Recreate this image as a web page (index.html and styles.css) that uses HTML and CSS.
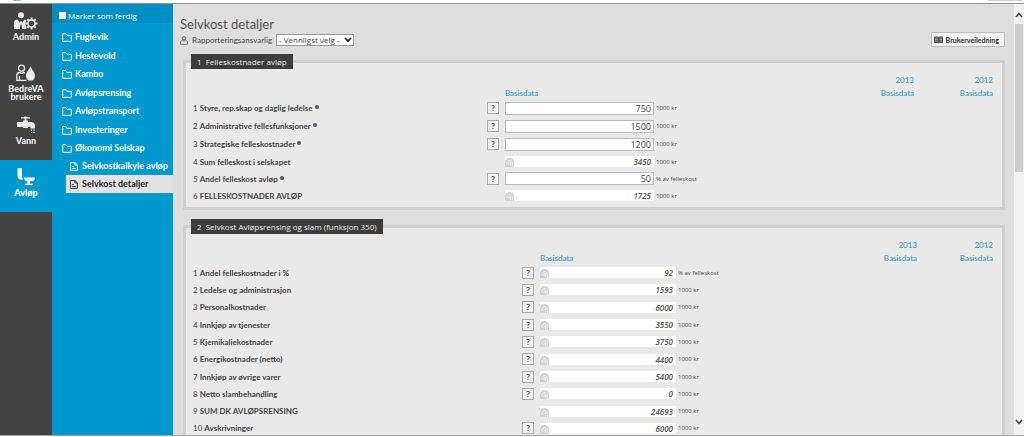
FILE: index.html
```html
<!DOCTYPE html>
<html lang="no">
<head>
<meta charset="utf-8">
<meta name="viewport" content="width=device-width, initial-scale=1">
<title>Selvkost detaljer</title>
<link rel="stylesheet" href="styles.css">
</head>
<body>
<svg class="defs" aria-hidden="true">
  <symbol id="folder" viewBox="0 0 10 9"><path d="M.7 8.3V.7h3.2l1 1.600h4.400v6z" fill="none" stroke="currentColor"/></symbol>
  <symbol id="page" viewBox="0 0 9 10"><path d="M.7.7h5l2.600 2.400v6.200H.7zM5.400.9v2.500h2.700M2.400 5h1.800M2.400 7.200h4.200" fill="none" stroke="currentColor"/></symbol>
  <symbol id="calc" viewBox="0 0 10 9"><path d="M0 9V4.500a4.500 4.500 0 0 1 9 0V9z" fill="#d0d0d0"/><path d="M1.800 6.500C2 4 3 2.500 5 2.500S7.500 4 7.500 9M3 6.500l2.500-2.300V8" fill="none" stroke="#f4f4f4" stroke-width=".9"/></symbol>
</svg>
<div class="topstrip"><span class="mark"></span><span class="tab"></span></div>
<div class="app">
  <nav class="modules" aria-label="Moduler">
    <a class="module" href="#admin">
      <svg width="24" height="18" viewBox="0 0 24 18"><g fill="currentColor"><circle cx="7" cy="3.300" r="3"/><path d="M0 17V10.500C0 8.500 1.500 7.500 3.500 7.500L6 11v6zM8 17v-6l2.500-3.500 2 .8c-1.500 2-1.500 4.500-.2 6.500v2.200z"/><path d="M7 9l1.200 1.500L7 15l-1.200-4.500z"/></g><circle cx="17.500" cy="11.500" r="3.600" fill="none" stroke="currentColor" stroke-width="1.600"/><path d="M17.500 5.500v2M17.500 15.500v2M11.500 11.500h2M21.500 11.500h2M13.300 7.300l1.400 1.400M20.300 14.300l1.400 1.400M13.300 15.700l1.400-1.400M20.300 8.700l1.400-1.400" stroke="currentColor" stroke-width="2"/></svg>
      <span>Admin</span>
    </a>
    <a class="module" href="#brukere">
      <svg width="20" height="18" viewBox="0 0 20 18"><g fill="none" stroke="currentColor" stroke-width="1.300"><circle cx="5.500" cy="4.200" r="3"/><path d="M10.500 16.300H.8V11.500c0-2 1.300-3 3-3 .8 1 2.800 1 3.600 0l1.600.4M3.500 12v4"/></g><path d="M14.500 2c1 3.500 4.500 6 4.500 10a4.500 4.800 0 0 1-9 0C10 8 13.500 5.500 14.500 2z" fill="currentColor"/></svg>
      <span>BedreVA brukere</span>
    </a>
    <a class="module" href="#vann">
      <svg width="20" height="18" viewBox="0 0 20 18"><path d="M5 1.200h3.500V.5h2v.7H14v1.200h-3.500V4.500H12V6h3c2.500 0 4 1.500 4 4v2.500h-4.500V11H12v1H7v-1H1V6h6V4.500h1.500V2.400H5z" fill="currentColor"/><path d="M15.500 13.500V18M18 13.500V18" stroke="currentColor" stroke-width="1.200" stroke-dasharray="1.200 1"/></svg>
      <span>Vann</span>
    </a>
    <a class="module is-active" href="#avlop">
      <svg width="18" height="18" viewBox="0 0 18 18"><path d="M1.500 0h2C4.300 0 5 .7 5 1.500V9l1 2.500H3.500C1.500 11.500.5 9.500.5 7V1.500C.5.500.8 0 1.500 0zM6.500 9.500H18c0 2.500-1.500 3.800-4 3.800h-1V15.700h3V17H8v-1.300h2.500v-2.500c-2-.2-3.500-1.200-4-3.700z" fill="currentColor"/></svg>
      <span>Avløp</span>
    </a>
  </nav>

  <aside class="sidebar">
    <label class="mark-done"><input type="checkbox">Marker som ferdig</label>
    <ul class="tree">
      <li><a href="#a"><svg class="ico"><use href="#folder"/></svg>Fuglevik</a></li>
      <li><a href="#b"><svg class="ico"><use href="#folder"/></svg>Hestevold</a></li>
      <li><a href="#c"><svg class="ico"><use href="#folder"/></svg>Kambo</a></li>
      <li><a href="#d"><svg class="ico"><use href="#folder"/></svg>Avløpsrensing</a></li>
      <li><a href="#e"><svg class="ico"><use href="#folder"/></svg>Avløpstransport</a></li>
      <li><a href="#f"><svg class="ico"><use href="#folder"/></svg>Investeringer</a></li>
      <li><a href="#g"><svg class="ico"><use href="#folder"/></svg>Økonomi Selskap</a>
        <ul class="subtree">
          <li><a href="#h"><svg class="ico"><use href="#page"/></svg>Selvkostkalkyle avløp</a></li>
          <li><a class="is-current" href="#i"><svg class="ico"><use href="#page"/></svg>Selvkost detaljer</a></li>
        </ul>
      </li>
    </ul>
  </aside>

  <main class="content">
    <header class="head">
      <div>
        <h1>Selvkost detaljer</h1>
        <div class="owner">
          <svg width="8" height="9" viewBox="0 0 8 9"><g fill="none" stroke="#666" stroke-width=".9"><circle cx="4" cy="2.300" r="1.700"/><path d="M.6 8.400V6c0-1.200.9-1.800 2-1.800.7.700 2 .7 2.800 0 1.100 0 2 .6 2 1.800v2.400z"/></g></svg>
          <label for="owner">Rapporteringsansvarlig</label>
          <div class="picker">
            <select id="owner"><option>- Vennligst velg -</option></select>
            <svg width="8" height="6" viewBox="0 0 8 6"><path d="M1 1l3 3.200L7 1" fill="none" stroke="#222" stroke-width="1.700"/></svg>
          </div>
        </div>
      </div>
      <button class="guide" type="button">
        <svg width="9" height="8" viewBox="0 0 9 8"><path d="M0 .5h4l.5.5.5-.5h4V7H5l-.5.700L4 7H0z" fill="#555"/><path d="M1 2h2.500M1 3.500h2.500M1 5h2.500M5.500 2H8M5.500 3.500H8M5.500 5H8" stroke="#ccc" stroke-width=".6"/></svg>
        Brukerveiledning
      </button>
    </header>

    <fieldset class="panel">
      <legend>1&nbsp; Felleskostnader avløp</legend>
      <table class="grid grid-inputs">
        <colgroup><col class="c-name"><col class="c-help"><col class="c-value"><col class="c-unit"><col class="c-year"><col class="c-last"></colgroup>
        <thead>
          <tr><th></th><th></th><th></th><th></th><th class="year">2013</th><th class="year">2012</th></tr>
          <tr><th></th><th></th><th class="base">Basisdata</th><th></th><th class="year">Basisdata</th><th class="year">Basisdata</th></tr>
        </thead>
        <tbody>
          <tr><td><label for="s1">1 <b>Styre, rep.skap og daglig ledelse</b></label><i class="dot"></i></td><td><button type="button" class="help">?</button></td><td><input id="s1" value="750"></td><td class="unit">1000 kr</td><td></td><td></td></tr>
          <tr><td><label for="s2">2 <b>Administrative fellesfunksjoner</b></label><i class="dot"></i></td><td><button type="button" class="help">?</button></td><td><input id="s2" value="1500"></td><td class="unit">1000 kr</td><td></td><td></td></tr>
          <tr><td><label for="s3">3 <b>Strategiske felleskostnader</b></label><i class="dot"></i></td><td><button type="button" class="help">?</button></td><td><input id="s3" value="1200"></td><td class="unit">1000 kr</td><td></td><td></td></tr>
          <tr class="short"><td>4 <b>Sum felleskost i selskapet</b></td><td></td><td><output class="sum"><svg class="calc"><use href="#calc"/></svg>3450</output></td><td class="unit">1000 kr</td><td></td><td></td></tr>
          <tr class="short"><td><label for="s5">5 <b>Andel felleskost avløp</b></label><i class="dot"></i></td><td><button type="button" class="help">?</button></td><td><input id="s5" value="50"></td><td class="unit">% av felleskost</td><td></td><td></td></tr>
          <tr class="short"><td>6 <b>FELLESKOSTNADER AVLØP</b></td><td></td><td><output class="sum"><svg class="calc"><use href="#calc"/></svg>1725</output></td><td class="unit">1000 kr</td><td></td><td></td></tr>
        </tbody>
      </table>
    </fieldset>

    <fieldset class="panel">
      <legend>2&nbsp; Selvkost Avløpsrensing og slam (funksjon 350)</legend>
      <table class="grid grid-sums">
        <colgroup><col class="c-name"><col class="c-help"><col class="c-value"><col class="c-unit"><col class="c-year"><col class="c-last"></colgroup>
        <thead>
          <tr><th></th><th></th><th></th><th></th><th class="year">2013</th><th class="year">2012</th></tr>
          <tr><th></th><th></th><th class="base">Basisdata</th><th></th><th class="year">Basisdata</th><th class="year">Basisdata</th></tr>
        </thead>
        <tbody>
          <tr><td>1 <b>Andel felleskostnader i %</b></td><td><button type="button" class="help">?</button></td><td><output class="sum"><svg class="calc"><use href="#calc"/></svg>92</output></td><td class="unit">% av felleskost</td><td></td><td></td></tr>
          <tr><td>2 <b>Ledelse og administrasjon</b></td><td><button type="button" class="help">?</button></td><td><output class="sum"><svg class="calc"><use href="#calc"/></svg>1593</output></td><td class="unit">1000 kr</td><td></td><td></td></tr>
          <tr><td>3 <b>Personalkostnader</b></td><td><button type="button" class="help">?</button></td><td><output class="sum"><svg class="calc"><use href="#calc"/></svg>6000</output></td><td class="unit">1000 kr</td><td></td><td></td></tr>
          <tr><td>4 <b>Innkjøp av tjenester</b></td><td><button type="button" class="help">?</button></td><td><output class="sum"><svg class="calc"><use href="#calc"/></svg>3550</output></td><td class="unit">1000 kr</td><td></td><td></td></tr>
          <tr><td>5 <b>Kjemikaliekostnader</b></td><td><button type="button" class="help">?</button></td><td><output class="sum"><svg class="calc"><use href="#calc"/></svg>3750</output></td><td class="unit">1000 kr</td><td></td><td></td></tr>
          <tr><td>6 <b>Energikostnader (netto)</b></td><td><button type="button" class="help">?</button></td><td><output class="sum"><svg class="calc"><use href="#calc"/></svg>4400</output></td><td class="unit">1000 kr</td><td></td><td></td></tr>
          <tr><td>7 <b>Innkjøp av øvrige varer</b></td><td><button type="button" class="help">?</button></td><td><output class="sum"><svg class="calc"><use href="#calc"/></svg>5400</output></td><td class="unit">1000 kr</td><td></td><td></td></tr>
          <tr><td>8 <b>Netto slambehandling</b></td><td><button type="button" class="help">?</button></td><td><output class="sum"><svg class="calc"><use href="#calc"/></svg>0</output></td><td class="unit">1000 kr</td><td></td><td></td></tr>
          <tr class="short"><td>9 <b>SUM DK AVLØPSRENSING</b></td><td></td><td><output class="sum"><svg class="calc"><use href="#calc"/></svg>24693</output></td><td class="unit">1000 kr</td><td></td><td></td></tr>
          <tr class="short"><td>10 <b>Avskrivninger</b></td><td><button type="button" class="help">?</button></td><td><output class="sum"><svg class="calc"><use href="#calc"/></svg>6000</output></td><td class="unit">1000 kr</td><td></td><td></td></tr>
          <tr class="short"><td></td><td></td><td></td><td></td><td></td><td></td></tr>
        </tbody>
      </table>
    </fieldset>
  </main>

  <div class="scroll" aria-hidden="true">
    <svg width="8" height="6" viewBox="0 0 8 6"><path d="M1 5l3-3.500L7 5" fill="none" stroke="#444" stroke-width="1.600"/></svg>
    <div class="track"><div class="thumb"></div></div>
    <svg width="8" height="6" viewBox="0 0 8 6"><path d="M1 1l3 3.500L7 1" fill="none" stroke="#444" stroke-width="1.600"/></svg>
  </div>
</div>
</body>
</html>
```
FILE: styles.css
```css
* { box-sizing: border-box; }
body {
  margin: 0;
  height: 100vh;
  display: flex;
  flex-direction: column;
  overflow: hidden;
  background: #fff;
  color: #444;
  font: 8px/12px Lato, "Open Sans", sans-serif;
}
a { color: inherit; text-decoration: none; }
button, input, select { font: inherit; color: inherit; margin: 0; padding: 0; }
.defs { position: absolute; width: 0; height: 0; }

.topstrip {
  display: flex;
  justify-content: space-between;
  height: 4px;
  flex: none;
  border-bottom: 1px solid #94939b;
}
.mark { width: 8px; height: 1px; margin-left: 13px; background: #7cc7a4; }
.tab { width: 34px; height: 1px; margin-right: 2px; background: #ccc; }

.app {
  flex: 1;
  min-height: 0;
  display: flex;
  border-bottom: 1px solid #a5a5a5;
  margin-bottom: 1px;
}

.modules { width: 52px; flex: none; background: #424242; color: #ececec; }
.module {
  display: flex;
  flex-direction: column;
  align-items: center;
  gap: 3px;
  height: 52px;
  padding-top: 8px;
  font-size: 9px;
  line-height: 8px;
  font-weight: 900;
  text-align: center;
}
.module svg { flex: none; }
.module.is-active { background: #0099cf; color: #fff; }

.sidebar { width: 121px; flex: none; background: #0099cf; color: #fff; }
.mark-done {
  display: flex;
  align-items: center;
  gap: 2px;
  height: 19px;
  padding: 4px 0 0 7px;
  background: #008dc3;
  font-family: "Open Sans", sans-serif;
}
.mark-done input { appearance: none; width: 7px; height: 7px; margin: 0; background: #fff; }
.tree, .subtree { list-style: none; margin: 0; padding: 0; }
.tree { padding-top: 5px; }
.tree a {
  display: flex;
  align-items: center;
  gap: 3px;
  height: 18px;
  padding-left: 10px;
  font-size: 9px;
  font-weight: 700;
}
.tree > li:nth-child(odd) { margin-bottom: 1px; }
.ico { width: 10px; height: 9px; flex: none; }
.subtree { padding-left: 14px; }
.tree .subtree a { padding-left: 3px; }
.tree .is-current { background: #e2e2e2; color: #222; }

.content { flex: 1; min-width: 0; overflow: hidden; padding: 12px 9px 0 7px; background: #dedede; }
.head { display: flex; justify-content: space-between; align-items: flex-end; }
h1 { margin: 0; font-size: 13px; line-height: 17px; font-weight: 400; color: #555; }
.owner { display: flex; align-items: center; gap: 4px; height: 14px; }
.picker { display: grid; align-items: center; }
.picker > * { grid-area: 1 / 1; }
.picker svg { justify-self: end; margin-right: 2px; pointer-events: none; }
.picker select {
  appearance: none;
  width: 78px;
  height: 12px;
  padding-left: 2px;
  border: 1px solid #999;
  border-radius: 0;
  background: #fff;
  font-family: "Open Sans", sans-serif;
  line-height: 10px;
}
.guide {
  display: flex;
  align-items: center;
  gap: 3px;
  height: 15px;
  padding: 0 5px 0 2px;
  border: 1px solid #bbb;
  background: #f3f3f3;
  font-size: 7px;
  font-weight: 900;
}

.panel {
  margin: 7px 0 0 3px;
  min-width: 0;
  padding: 4px 9px 3px 7px;
  border: 3px solid #cfcfcf;
  background: #e9e9e9;
}
.panel + .panel { margin-top: 9px; }
legend {
  height: 15px;
  margin-left: -2px;
  padding: 0 6px;
  background: #3d3d3d;
  color: #eee;
  font-family: "Open Sans", sans-serif;
  line-height: 15px;
}

.grid { width: 100%; table-layout: fixed; border-collapse: collapse; }
.grid th, .grid td { padding: 0; text-align: left; white-space: nowrap; }
.grid th { height: 13px; color: #2c93c4; font-weight: 400; }
.grid .year { text-align: right; }
.grid td { height: 18px; vertical-align: middle; }
.grid .short td { height: 17px; }
.c-help { width: 18px; }
.grid-inputs .c-name { width: 294px; }
.grid-inputs .c-value { width: 149px; }
.grid-inputs .c-last { width: 79px; }
.grid-sums .c-name { width: 329px; }
.grid-sums .c-value { width: 136px; }
.grid-sums .c-last { width: 76px; }
.c-year { width: 60px; }
.grid-sums td { height: 17px; }
.grid-sums tr:nth-child(3n) td { height: 18px; }
.grid-sums .short td { height: 16px; }
.dot {
  display: inline-block;
  width: 4px;
  height: 4px;
  margin-left: 2px;
  border-radius: 50%;
  background: #555;
  vertical-align: 2px;
}
.help {
  display: block;
  width: 12px;
  height: 12px;
  border: 1px solid #aaa;
  background: #f4f4f4;
  line-height: 10px;
  font-weight: 700;
  text-align: center;
}
.grid input {
  display: block;
  width: 100%;
  height: 13px;
  padding-right: 2px;
  border: 1px solid #bbb;
  background: #fff;
  font-family: "Open Sans", sans-serif;
  font-size: 9px;
  text-align: right;
}
.sum {
  display: flex;
  justify-content: space-between;
  align-items: center;
  height: 11px;
  padding-right: 3px;
  background: #fff;
  color: #555;
  font-family: "Open Sans", sans-serif;
  line-height: 11px;
  font-style: italic;
  font-weight: 600;
}
.calc { width: 10px; height: 9px; align-self: flex-end; }
.grid .unit { padding-left: 2px; font-family: "Open Sans", sans-serif; font-size: 6px; }

.scroll {
  width: 10px;
  flex: none;
  display: flex;
  flex-direction: column;
  align-items: center;
  gap: 6px;
  padding: 8px 0 10px;
  background: #f1f1f1;
}
.scroll svg { flex: none; }
.track { flex: 1; width: 8px; }
.thumb { height: 38%; background: #cdcdcd; }
```
